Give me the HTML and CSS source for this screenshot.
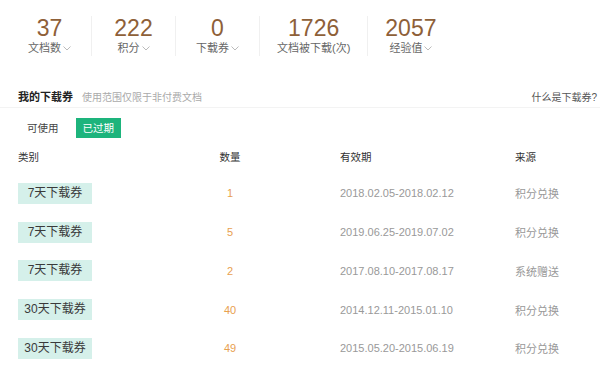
FILE: index.html
```html
<!DOCTYPE html>
<html lang="zh-CN">
<head>
<meta charset="utf-8">
<link rel="stylesheet" href="styles.css">
</head>
<body>
<div class="stats">
  <div class="stat"><div class="num">37</div><div class="lbl">文档数<svg class="chev" width="8" height="5" viewBox="0 0 8 5"><path d="M0.5 0.5 L4 4 L7.5 0.5" fill="none" stroke="#bbb" stroke-width="1"/></svg></div></div>
  <div class="stat"><div class="num">222</div><div class="lbl">积分<svg class="chev" width="8" height="5" viewBox="0 0 8 5"><path d="M0.5 0.5 L4 4 L7.5 0.5" fill="none" stroke="#bbb" stroke-width="1"/></svg></div></div>
  <div class="stat"><div class="num">0</div><div class="lbl">下载券<svg class="chev" width="8" height="5" viewBox="0 0 8 5"><path d="M0.5 0.5 L4 4 L7.5 0.5" fill="none" stroke="#bbb" stroke-width="1"/></svg></div></div>
  <div class="stat"><div class="num">1726</div><div class="lbl">文档被下载(次)</div></div>
  <div class="stat last"><div class="num">2057</div><div class="lbl">经验值<svg class="chev" width="8" height="5" viewBox="0 0 8 5"><path d="M0.5 0.5 L4 4 L7.5 0.5" fill="none" stroke="#bbb" stroke-width="1"/></svg></div></div>
</div>

<div class="section-head">
  <div class="title"><span class="t">我的下载券</span><span class="sub">使用范围仅限于非付费文档</span></div>
  <div class="help">什么是下载券?</div>
</div>

<div class="tabs">
  <span class="tab">可使用</span>
  <span class="tab active">已过期</span>
</div>

<div class="table">
  <div class="row head">
    <div class="c1">类别</div><div class="c2">数量</div><div class="c3">有效期</div><div class="c4">来源</div>
  </div>
  <div class="row">
    <div class="c1"><span class="badge">7天下载券</span></div><div class="c2 qty">1</div><div class="c3 date">2018.02.05-2018.02.12</div><div class="c4 src">积分兑换</div>
  </div>
  <div class="row">
    <div class="c1"><span class="badge">7天下载券</span></div><div class="c2 qty">5</div><div class="c3 date">2019.06.25-2019.07.02</div><div class="c4 src">积分兑换</div>
  </div>
  <div class="row">
    <div class="c1"><span class="badge">7天下载券</span></div><div class="c2 qty">2</div><div class="c3 date">2017.08.10-2017.08.17</div><div class="c4 src">系统赠送</div>
  </div>
  <div class="row">
    <div class="c1"><span class="badge">30天下载券</span></div><div class="c2 qty">40</div><div class="c3 date">2014.12.11-2015.01.10</div><div class="c4 src">积分兑换</div>
  </div>
  <div class="row">
    <div class="c1"><span class="badge">30天下载券</span></div><div class="c2 qty">49</div><div class="c3 date">2015.05.20-2015.06.19</div><div class="c4 src">积分兑换</div>
  </div>
</div>
</body>
</html>
```

FILE: styles.css
```css
html, body {
  margin: 0;
  padding: 0;
  background: #fff;
}
body {
  font-family: "Liberation Sans", "Noto Sans CJK SC", sans-serif;
  color: #333;
  width: 600px;
  height: 385px;
  overflow: hidden;
}
.stats {
  display: flex;
  padding: 16px 0 0 8px;
}
.stat {
  min-width: 84px;
  box-sizing: border-box;
  padding: 0 17px;
  display: flex;
  flex-direction: column;
  align-items: center;
  border-right: 1px solid #f0f0f0;
  height: 40px;
}
.stat.last {
  border-right: none;
}
.num {
  font-size: 23px;
  line-height: 25px;
  color: #8e6038;
}
.lbl {
  font-size: 11px;
  line-height: 15px;
  color: #666;
  display: flex;
  align-items: center;
  white-space: nowrap;
}
.chev {
  margin-left: 2px;
}
.section-head {
  margin-top: 29px;
  height: 22px;
  border-bottom: 1px solid #f3f3f3;
  display: flex;
  align-items: center;
  justify-content: space-between;
  padding: 0 3px 0 18px;
}
.title {
  display: flex;
  align-items: baseline;
}
.t {
  font-size: 11px;
  font-weight: bold;
  color: #222;
}
.sub {
  font-size: 10px;
  color: #aaa;
  margin-left: 9px;
}
.help {
  font-size: 10px;
  color: #555;
}
.tabs {
  display: flex;
  gap: 10px;
  padding-left: 20px;
  margin-top: 10px;
}
.tab {
  font-size: 10.5px;
  line-height: 20px;
  height: 20px;
  padding: 0 7px;
  color: #444;
}
.tab.active {
  background: #1db47c;
  color: #fff;
}
.table {
  margin-top: 8px;
  padding-left: 18px;
}
.row {
  display: grid;
  grid-template-columns: 182px 60px 255px 1fr;
  align-items: center;
  height: 38.75px;
}
.row.head {
  height: 20px;
  font-size: 10.5px;
  color: #333;
  margin-bottom: 8px;
}
.c2 {
  text-align: center;
}
.c3 {
  padding-left: 80px;
}
.badge {
  display: inline-block;
  width: 74px;
  text-align: center;
  background: #d5f0ea;
  color: #3a3a3a;
  font-size: 12px;
  line-height: 21px;
  height: 21px;
}
.qty {
  font-size: 11px;
  color: #e8a04f;
}
.date {
  font-size: 11px;
  color: #999;
}
.src {
  font-size: 11px;
  color: #999;
}
```
